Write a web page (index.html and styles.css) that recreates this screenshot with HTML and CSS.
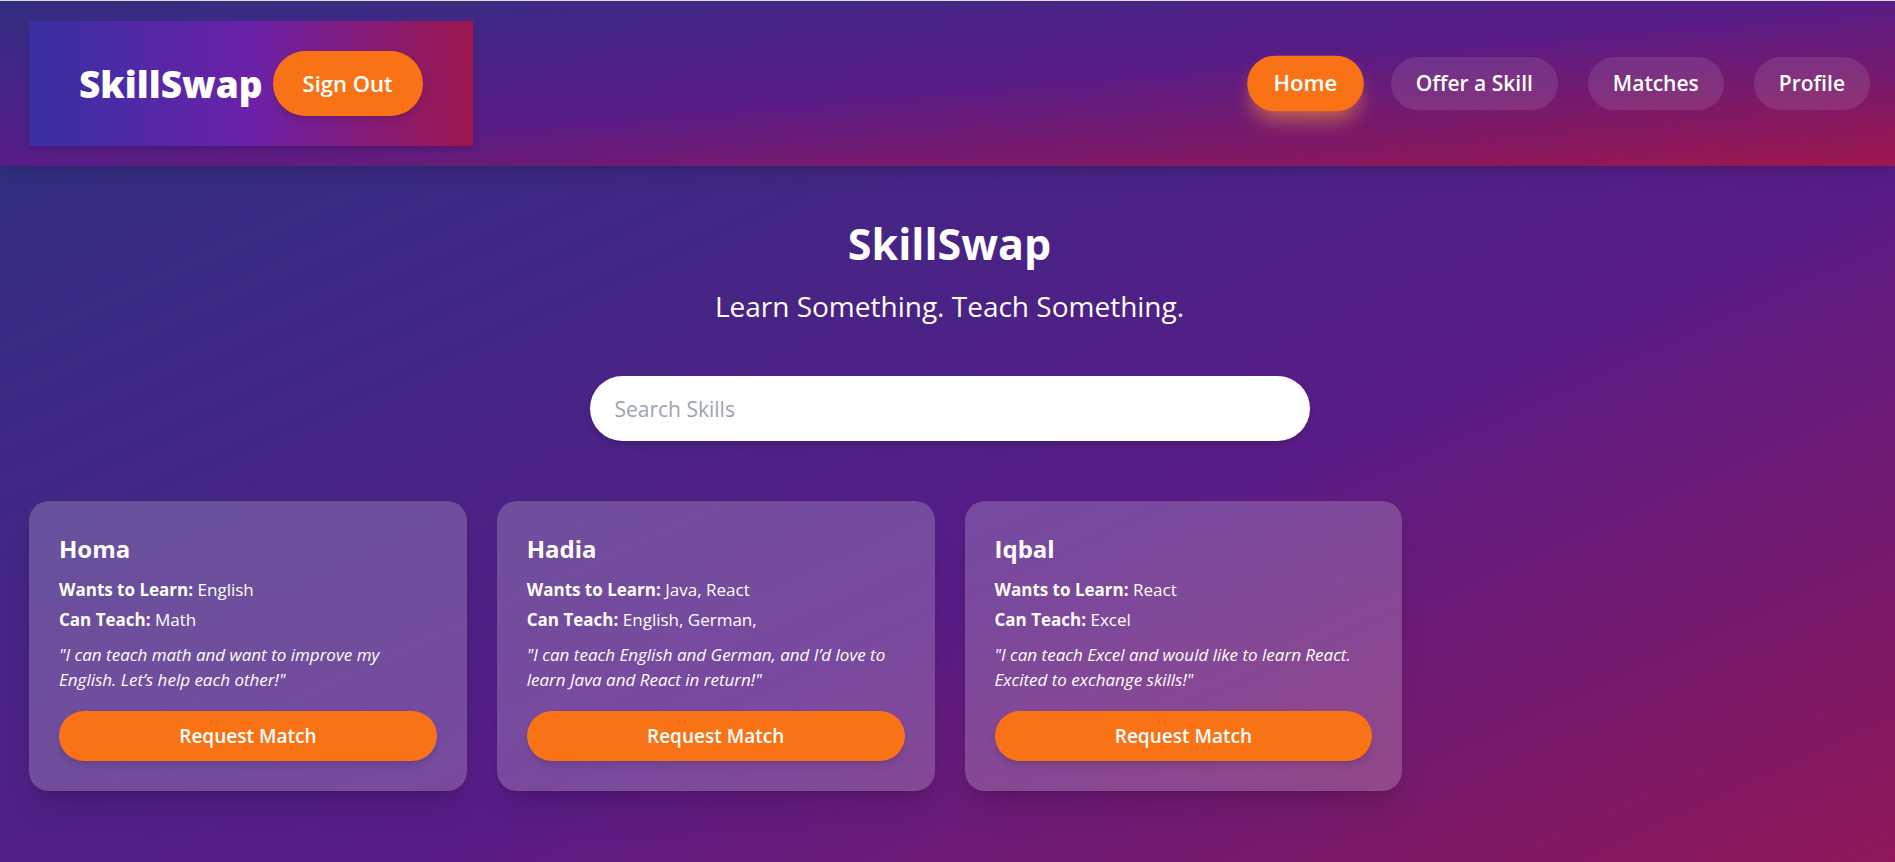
FILE: index.html
```html
<!DOCTYPE html>
<html lang="en">
<head>
<meta charset="utf-8">
<meta name="viewport" content="width=device-width, initial-scale=1">
<title>SkillSwap</title>
<link rel="stylesheet" href="styles.css">
</head>
<body>
<header class="site-header">
  <div class="brand">
    <span class="brand-name">SkillSwap</span>
    <button class="btn btn-signout" type="button">Sign Out</button>
  </div>
  <nav class="nav" aria-label="Main">
    <a class="nav-link nav-link-active" href="#home" aria-current="page">Home</a>
    <a class="nav-link" href="#offer">Offer a Skill</a>
    <a class="nav-link" href="#matches">Matches</a>
    <a class="nav-link" href="#profile">Profile</a>
  </nav>
</header>
<main class="page">
  <section class="hero">
    <h1 class="hero-title">SkillSwap</h1>
    <p class="hero-tagline">Learn Something. Teach Something.</p>
    <input class="search" type="search" placeholder="Search Skills" aria-label="Search Skills">
  </section>
  <section class="cards" aria-label="Members">
    <article class="card">
      <h2 class="card-name">Homa</h2>
      <p class="card-line"><strong>Wants to Learn:</strong> English</p>
      <p class="card-line"><strong>Can Teach:</strong> Math</p>
      <p class="card-quote">"I can teach math and want to improve my English. Let’s help each other!"</p>
      <button class="btn btn-match" type="button">Request Match</button>
    </article>
    <article class="card">
      <h2 class="card-name">Hadia</h2>
      <p class="card-line"><strong>Wants to Learn:</strong> Java, React</p>
      <p class="card-line"><strong>Can Teach:</strong> English, German,</p>
      <p class="card-quote">"I can teach English and German, and I’d love to learn Java and React in return!"</p>
      <button class="btn btn-match" type="button">Request Match</button>
    </article>
    <article class="card">
      <h2 class="card-name">Iqbal</h2>
      <p class="card-line"><strong>Wants to Learn:</strong> React</p>
      <p class="card-line"><strong>Can Teach:</strong> Excel</p>
      <p class="card-quote">"I can teach Excel and would like to learn React. Excited to exchange skills!"</p>
      <button class="btn btn-match" type="button">Request Match</button>
    </article>
  </section>
</main>
</body>
</html>
```
FILE: styles.css
```css
*,
*::before,
*::after {
  box-sizing: border-box;
}

body {
  margin: 0;
  border-top: 1px solid #dcdcdc;
  background: #312e81;
  color: #fff;
  font-family: "Segoe UI", "Open Sans", "Noto Sans", sans-serif;
  font-size: 17px;
  line-height: 25px;
}

h1, h2, p {
  margin: 0;
}

.site-header {
  position: relative;
  display: flex;
  align-items: center;
  justify-content: space-between;
  padding: 20px 25px 20px 29px;
  background: linear-gradient(to bottom right, #312e81, #581c87, #9d174d);
  box-shadow: 0 12px 19px -4px rgba(0, 0, 0, 0.1), 0 5px 8px -5px rgba(0, 0, 0, 0.1);
}

.brand {
  display: flex;
  align-items: center;
  gap: 10px;
  padding: 30px 50px;
  background: linear-gradient(to right, #3730a3, #6b21a8, #9d174d);
  box-shadow: 0 5px 8px -1px rgba(0, 0, 0, 0.1), 0 3px 5px -3px rgba(0, 0, 0, 0.1);
}

.brand-name {
  font-size: 37px;
  font-weight: 800;
  line-height: 50px;
}

.btn {
  border: 0;
  border-radius: 33px;
  background: #f97316;
  color: #fff;
  font-family: inherit;
  font-weight: 600;
  cursor: pointer;
  box-shadow: 0 5px 8px -1px rgba(0, 0, 0, 0.1), 0 3px 5px -3px rgba(0, 0, 0, 0.1);
}

.btn-signout {
  padding: 15px 30px;
  font-size: 22px;
  line-height: 35px;
}

.nav {
  display: flex;
  align-items: center;
  gap: 30px;
}

.nav-link {
  padding: 9px 25px;
  border-radius: 33px;
  background: rgba(255, 255, 255, 0.1);
  color: #fff;
  font-size: 21px;
  font-weight: 600;
  line-height: 35px;
  text-decoration: none;
}

.nav-link-active {
  background: #f97316;
  transform: scale(1.05);
  box-shadow: 0 12px 18px -4px rgba(251, 146, 60, 0.6);
}

.page {
  min-height: 100vh;
  padding: 50px 25px 50px 29px;
  background: linear-gradient(to bottom right, #312e81, #581c87, #9d174d);
}

.hero {
  display: flex;
  flex-direction: column;
  align-items: center;
  margin-bottom: 60px;
  text-align: center;
}

.hero-title {
  margin-bottom: 15px;
  font-size: 43px;
  font-weight: 700;
  line-height: 55px;
}

.hero-tagline {
  margin-bottom: 50px;
  font-size: 28px;
  line-height: 40px;
}

.search {
  width: 100%;
  max-width: 720px;
  height: 65px;
  padding: 0 25px;
  border: 0;
  border-radius: 33px;
  background: #fff;
  color: #1f2937;
  font-family: inherit;
  font-size: 21px;
  box-shadow: 0 5px 8px -1px rgba(0, 0, 0, 0.1), 0 3px 5px -3px rgba(0, 0, 0, 0.1);
}

.search::placeholder {
  color: #9ca3af;
}

.cards {
  display: grid;
  grid-template-columns: repeat(auto-fill, minmax(380px, 1fr));
  gap: 30px;
}

.card {
  display: flex;
  flex-direction: column;
  padding: 30px;
  border-radius: 20px;
  background: rgba(255, 255, 255, 0.2);
  box-shadow: 0 25px 31px -6px rgba(0, 0, 0, 0.1), 0 10px 12px -7px rgba(0, 0, 0, 0.1);
}

.card-name {
  margin-bottom: 11px;
  font-size: 24px;
  font-weight: 700;
  line-height: 35px;
}

.card-line {
  margin-bottom: 5px;
}

.card-quote {
  margin: 5px 0 19px;
  font-style: italic;
}

.btn-match {
  padding: 10px 20px;
  font-size: 19px;
  line-height: 30px;
}
```
